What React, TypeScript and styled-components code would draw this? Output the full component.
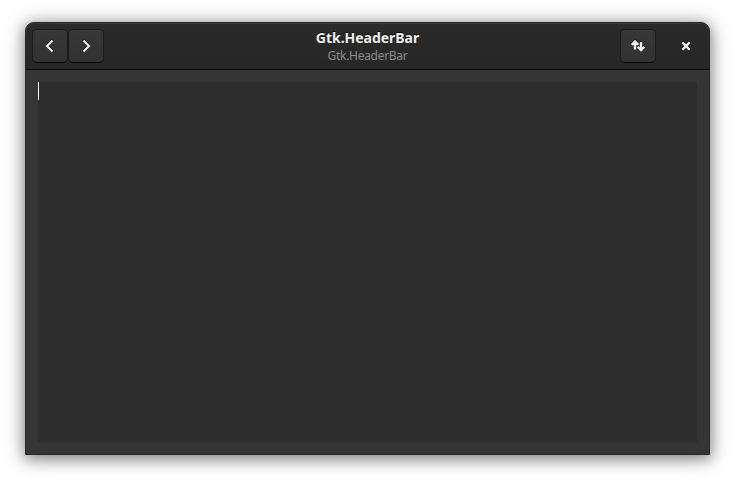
import React from 'react';
import styled, { createGlobalStyle } from 'styled-components';

const GlobalStyle = createGlobalStyle`
  * { box-sizing: border-box; }
  html, body { margin: 0; background: #fff; overflow: hidden; }
`;

const Desktop = styled.main`
  width: 735px;
  height: 483px;
  padding: 22px 25px 28px;
  background: #fff;
  font-family: 'Noto Sans', 'Open Sans', sans-serif;
`;

const Window = styled.section`
  width: 685px;
  height: 433px;
  display: flex;
  flex-direction: column;
  overflow: hidden;
  border: 1px solid #272727;
  border-radius: 9px 9px 0 0;
  background: #353535;
  box-shadow: 0 3px 14px 1px rgba(0, 0, 0, 0.38), 0 2px 24px 1px rgba(0, 0, 0, 0.2);
`;

const HeaderBar = styled.header`
  height: 47px;
  flex: none;
  display: grid;
  grid-template-columns: 1fr auto 1fr;
  align-items: center;
  padding: 0 5px 0 6px;
  border-bottom: 1px solid #070707;
  border-radius: 8px 8px 0 0;
  background: linear-gradient(to top, #262626, #2b2b2b);
  box-shadow: inset 0 1px #383838;
`;

const Controls = styled.div<{ $end?: boolean }>`
  display: flex;
  justify-content: ${({ $end }) => ($end ? 'flex-end' : 'flex-start')};
  gap: ${({ $end }) => ($end ? '12px' : '0')};
`;

const HeaderButton = styled.button<{ $flat?: boolean }>`
  width: 36px;
  height: 34px;
  display: flex;
  align-items: center;
  justify-content: center;
  padding: 0;
  border: 1px solid ${({ $flat }) => ($flat ? 'transparent' : '#1b1b1b')};
  border-bottom-color: ${({ $flat }) => ($flat ? 'transparent' : '#070707')};
  border-radius: 5px;
  background: ${({ $flat }) => ($flat ? 'transparent' : 'linear-gradient(to top, #323232, #373737)')};
  box-shadow: ${({ $flat }) => ($flat ? 'none' : 'inset 0 1px rgba(255, 255, 255, 0.02)')};
  color: #eeeeec;
`;

const Icon = styled.svg`
  width: 16px;
  height: 16px;
  display: block;
  overflow: visible;
  fill: none;
  stroke: currentColor;
  stroke-width: 2;
  filter: drop-shadow(0 -1px 0 rgba(0, 0, 0, 0.65));
`;

const Titles = styled.div`
  padding-right: 1px;
  text-align: center;
  white-space: nowrap;
`;

const Title = styled.h1`
  margin: 0;
  color: #eeeeec;
  font-size: 14px;
  letter-spacing: -0.03px;
  font-weight: 700;
  line-height: 20px;
  text-shadow: 0 -1px rgba(0, 0, 0, 0.7);
`;

const Subtitle = styled.p`
  margin: 0;
  color: #8b8b8a;
  font-size: 12px;
  letter-spacing: -0.3px;
  font-weight: 400;
  line-height: 16px;
`;

const Content = styled.div`
  flex: 1;
  display: flex;
  padding: 12px;
`;

const TextView = styled.div`
  flex: 1;
  background: #2d2d2d;
`;

const Caret = styled.span`
  display: block;
  width: 1px;
  height: 18px;
  background: #fff;
`;

export default function App() {
  return (
    <>
      <GlobalStyle />
      <Desktop>
        <Window>
          <HeaderBar>
            <Controls>
              <HeaderButton aria-label="Back">
                <Icon viewBox="0 0 16 16"><path d="M10.500 2.500 5 8l5.500 5.500" /></Icon>
              </HeaderButton>
              <HeaderButton aria-label="Forward">
                <Icon viewBox="0 0 16 16"><path d="M5.500 2.500 11 8l-5.500 5.500" /></Icon>
              </HeaderButton>
            </Controls>
            <Titles>
              <Title>Gtk.HeaderBar</Title>
              <Subtitle>Gtk.HeaderBar</Subtitle>
            </Titles>
            <Controls $end>
              <HeaderButton aria-label="Send and receive">
                <Icon viewBox="0 0 16 16">
                  <path strokeWidth="2.300" d="M5 11.500V4M1.700 6.700 5 3.400 8.300 6.700M11 4v7.500M7.700 8.700 11 12l3.300-3.300" />
                </Icon>
              </HeaderButton>
              <HeaderButton $flat aria-label="Close">
                <Icon viewBox="0 0 16 16"><path strokeWidth="2.200" d="m4.400 4.400 7.200 7.200m0-7.200-7.200 7.200" /></Icon>
              </HeaderButton>
            </Controls>
          </HeaderBar>
          <Content>
            <TextView>
              <Caret />
            </TextView>
          </Content>
        </Window>
      </Desktop>
    </>
  );
}
